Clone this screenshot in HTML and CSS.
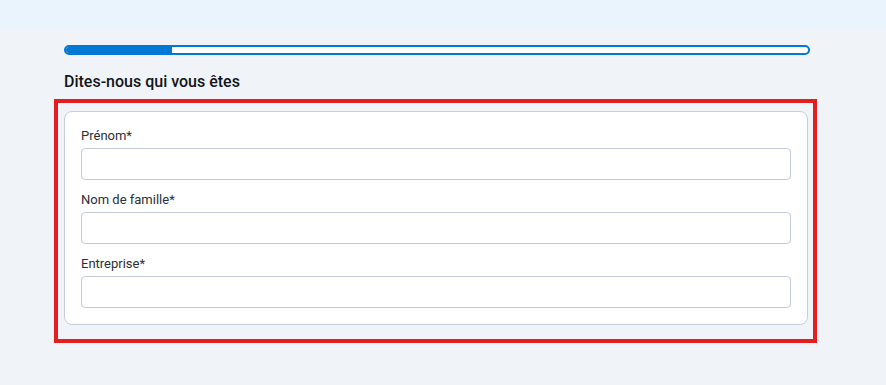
FILE: index.html
```html
<!DOCTYPE html>
<html lang="fr">
<head>
  <meta charset="UTF-8">
  <meta name="viewport" content="width=device-width, initial-scale=1.0">
  <title>Dites-nous qui vous êtes</title>
  <link rel="stylesheet" href="styles.css">
</head>
<body>
  <div class="top-band"></div>
  <div class="page">
    <div class="progress"><div class="progress-fill"></div></div>
    <h2 class="step-title">Dites-nous qui vous êtes</h2>
    <div class="card-wrap">
      <form class="card">
        <div class="field">
          <label for="prenom">Prénom*</label>
          <input id="prenom" type="text">
        </div>
        <div class="field">
          <label for="nom">Nom de famille*</label>
          <input id="nom" type="text">
        </div>
        <div class="field">
          <label for="entreprise">Entreprise*</label>
          <input id="entreprise" type="text">
        </div>
      </form>
      <div class="highlight"></div>
    </div>
  </div>
</body>
</html>
```

FILE: styles.css
```css
body {
  font-family: Roboto, 'Liberation Sans', Arial, sans-serif;
  margin: 0;
  padding: 0;
  background: #f0f4f8;
  min-height: 100vh;
}
.top-band {
  height: 29px;
  background: #eaf4fc;
}
.page {
  padding: 16px 0 0 64px;
  width: 746px;
}
.progress {
  height: 10px;
  border: 2px solid #0078d4;
  border-radius: 6px;
  background: #ffffff;
  box-sizing: border-box;
  overflow: hidden;
}
.progress-fill {
  width: 106px;
  height: 100%;
  background: #0078d4;
}
.step-title {
  font-size: 16px;
  line-height: 20px;
  font-weight: 500;
  color: #11151a;
  margin: 17px 0 19px;
}
.card-wrap {
  position: relative;
  width: 744px;
}
.card {
  background: #ffffff;
  border: 1px solid #c6d0da;
  border-radius: 8px;
  padding: 16px;
  display: flex;
  flex-direction: column;
  gap: 12px;
}
.field {
  display: flex;
  flex-direction: column;
  gap: 4px;
}
.field label {
  font-size: 13px;
  line-height: 16px;
  color: #2b2f36;
}
.field input {
  height: 32px;
  box-sizing: border-box;
  border: 1px solid #c3ccd6;
  border-radius: 4px;
  background: #ffffff;
  font-family: inherit;
  font-size: 13px;
  padding: 0 8px;
  margin: 0;
}
.highlight {
  position: absolute;
  left: -10px;
  top: -12px;
  width: 763px;
  height: 244px;
  box-sizing: border-box;
  border: 4px solid #e41e1e;
  pointer-events: none;
}
```
